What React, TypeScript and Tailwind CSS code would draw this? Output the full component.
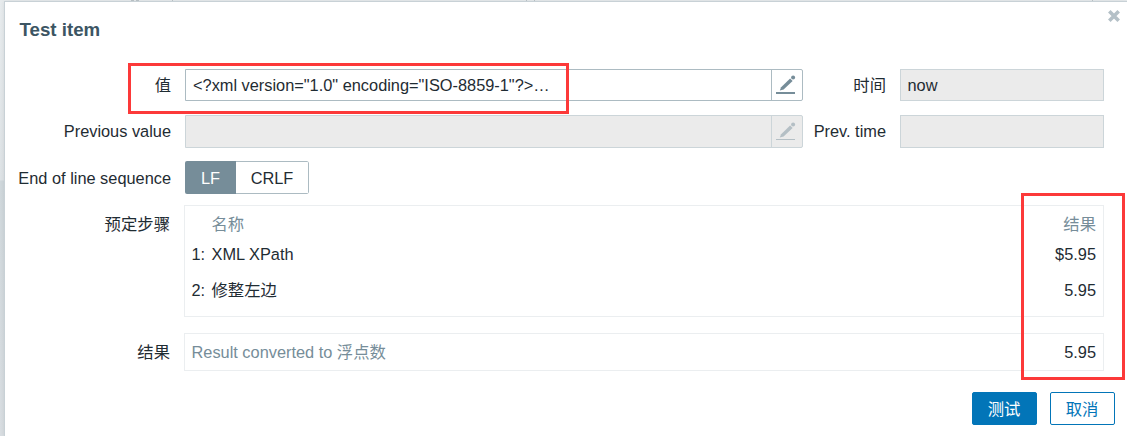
import type { ReactNode } from "react";

function Label({ children, className = "" }: { children: ReactNode; className?: string }) {
  return <div className={`shrink-0 whitespace-nowrap text-right leading-[20px] ${className}`}>{children}</div>;
}

function PencilIcon({ muted = false }: { muted?: boolean }) {
  return (
    <svg
      width="20"
      height="20"
      viewBox="0 0 20 20"
      className={muted ? "text-[#b4bfc5]" : "text-[#768d99]"}
      fill="currentColor"
    >
      <rect x="0" y="17" width="19" height={muted ? 1 : 2} />
      <path d="M3.8 15.6l1.3-3.4 9-8.6 2.5 2.5-9 8.5z" />
      <circle cx="17.1" cy="2.4" r="2" />
    </svg>
  );
}

export default function App() {
  return (
    <div className="h-[436px] w-[1127px] overflow-hidden bg-[linear-gradient(to_bottom,#e7ebed_0px,#dde2e5_180px,#cfd7db_181px,#d8dde1_436px)] pl-1 font-['Liberation_Sans','Noto_Sans_CJK_SC',sans-serif] text-[16.35px] text-[#1f2c33]">
      <div className="flex h-px bg-[#e8ecee]">
        <span className="ml-[127px] w-[3px] bg-[#b7bfc3]" />
        <span className="ml-[2px] w-[3px] bg-[#b7bfc3]" />
        <span className="ml-[33px] w-px bg-[#b7bfc3]" />
        <span className="ml-[353px] w-px bg-[#b7bfc3]" />
        <span className="ml-[7px] w-px bg-[#b7bfc3]" />
        <span className="ml-[557px] w-px bg-[#b7bfc3]" />
      </div>
      <main className="h-[435px] border-l border-t border-[#c8d1d6] bg-white shadow-[0_0_4px_rgba(0,0,0,0.08)]">
        <header className="flex h-[67px] items-start justify-between pl-[14.5px] pr-[7px]">
          <h1 className="pt-[16px] text-[18.7px] font-bold leading-[24px] text-[#3c5563]">Test item</h1>
          <svg width="12" height="12" viewBox="0 0 12 12" className="mt-[8px]" stroke="#b4c0c7" strokeWidth="3.6">
            <path d="M1.3 1.3l9.4 9.4M10.7 1.3l-9.4 9.4" />
          </svg>
        </header>

        <section className="flex h-[32px] items-center">
          <Label className="w-[166px]">值</Label>
          <div className="ml-[14px] flex h-[32px] w-[618px] rounded-r-[2px] border border-[#acbbc2]">
            <div className="flex-1 pl-[7px] leading-[31px]">&lt;?xml version="1.0" encoding="ISO-8859-1"?&gt;…</div>
            <div className="flex w-[31px] items-center justify-center border-l border-[#acbbc2] pr-[2px]">
              <PencilIcon />
            </div>
          </div>
          <Label className="w-[83px]">时间</Label>
          <div className="ml-[14px] h-[32px] w-[204px] border border-[#ccd5d9] bg-[#ebebeb] pl-[6.5px] leading-[31px]">now</div>
        </section>

        <section className="mt-[14px] flex h-[33px] items-center">
          <Label className="w-[166px] pb-[2px]">Previous value</Label>
          <div className="ml-[14px] flex h-[33px] w-[618px] rounded-r-[2px] border border-[#ccd5d9] bg-[#ebebeb]">
            <div className="flex-1" />
            <div className="flex w-[31px] items-center justify-center border-l border-[#ccd5d9] pr-[2px]">
              <PencilIcon muted />
            </div>
          </div>
          <Label className="w-[83px] pb-[2px]">Prev. time</Label>
          <div className="ml-[14px] h-[33px] w-[204px] border border-[#ccd5d9] bg-[#ebebeb]" />
        </section>

        <section className="mt-[13px] flex h-[33px] items-center">
          <Label className="w-[166px]">End of line sequence</Label>
          <div className="ml-[14px] flex h-[33px] w-[124px] overflow-hidden rounded-[2px] text-center leading-[35px]">
            <div className="w-[51px] bg-[#768d99] text-white">LF</div>
            <div className="flex-1 rounded-r-[2px] border border-l-0 border-[#acbbc2] leading-[33px]">CRLF</div>
          </div>
        </section>

        <section className="mt-[11px] flex h-[112px]">
          <Label className="w-[165px] pt-[9px]">预定步骤</Label>
          <div className="ml-[14px] w-[920px] border border-[#ebeef0] pl-[6.5px] pr-[7px] leading-[20px]">
            <div className="flex justify-between pl-[20px] pt-[8px] text-[#768d99]">
              <span>名称</span>
              <span>结果</span>
            </div>
            <div className="mt-[10px] flex">
              <span className="w-[20px]">1:</span>
              <span className="flex-1">XML XPath</span>
              <span>$5.95</span>
            </div>
            <div className="mt-[16px] flex">
              <span className="w-[20px]">2:</span>
              <span className="flex-1">修整左边</span>
              <span>5.95</span>
            </div>
          </div>
        </section>

        <section className="mt-[16px] flex h-[38px] items-center">
          <Label className="w-[165px]">结果</Label>
          <div className="ml-[14px] flex h-[38px] w-[920px] items-center justify-between border border-[#ebeef0] pl-[6.5px] pr-[7px] leading-[20px]">
            <span className="text-[#768d99]">Result converted to 浮点数</span>
            <span>5.95</span>
          </div>
        </section>

        <footer className="mt-[21px] flex justify-end gap-[13px] pr-[12px]">
          <button className="h-[33px] w-[65px] rounded-[2px] border border-[#0275b8] bg-[#0275b8] pr-px leading-[20px] text-white">测试</button>
          <button className="h-[33px] w-[65px] rounded-[2px] border border-[#0275b8] bg-white pr-px leading-[20px] text-[#0275b8]">取消</button>
        </footer>
      </main>

      <div className="absolute left-[128px] top-[63px] h-[51px] w-[441px] border-[3px] border-[#fc3939]" />
      <div className="absolute left-[1021px] top-[193px] h-[187px] w-[104px] border-[3px] border-[#fc3939]" />
    </div>
  );
}
